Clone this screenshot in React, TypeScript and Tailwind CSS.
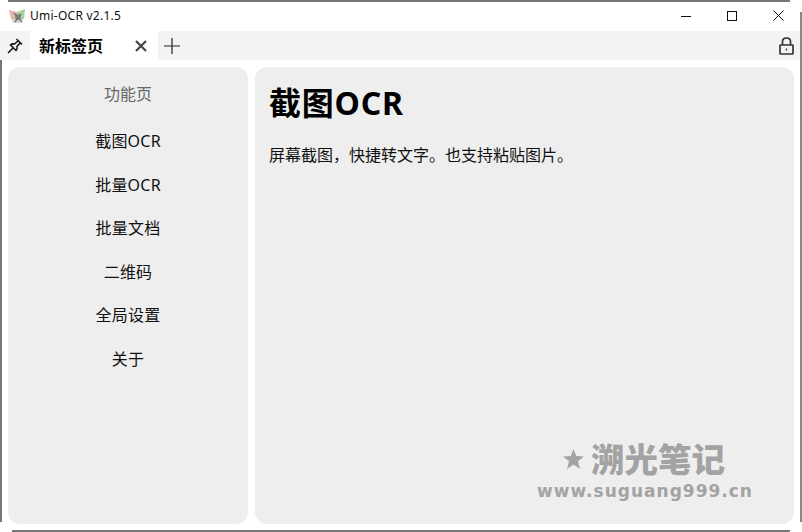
import React from "react";

const font = { fontFamily: '"Noto Sans","Noto Sans CJK SC",sans-serif' };

function Pin() {
  return (
    <svg width="16" height="16" viewBox="0 0 16 16" fill="none" stroke="#111" strokeWidth="1.5">
      <path d="M9.5 1 L15 6.5 M11.5 2.5 L7.5 6 Q5 5.5 3.5 7 L9 12.5 Q10.5 11 10 8.5 L13.5 4.5 M6 10 L1 15" />
    </svg>
  );
}

function Lock() {
  return (
    <svg width="15" height="18" viewBox="0 0 15 18" fill="none" stroke="#333" strokeWidth="1.7">
      <rect x="1" y="8" width="13" height="9" rx="0.5" />
      <path d="M3.5 8 V4.5 Q3.5 1 7.5 1 Q11.5 1 11.5 4.5 V8" />
      <path d="M7.5 11.5 V13.5" strokeWidth="1.3" />
    </svg>
  );
}

function Logo() {
  return (
    <svg width="17" height="16" viewBox="0 0 17 16">
      <path d="M0 2 L8 4 V11 H2 Z" fill="#e8b4b0" />
      <path d="M8 4 L16 1 L15 11 H8 Z" fill="#a8d0a0" />
      <path d="M2 11 H14 L12 15 H4 Z" fill="#d5d5d5" />
      <path d="M5 5 L13 14 M12 6 L6 14" stroke="#777" strokeWidth="1.3" />
      <rect x="7" y="7" width="4" height="4" fill="none" stroke="#666" />
    </svg>
  );
}

const nav = ["截图OCR", "批量OCR", "批量文档", "二维码", "全局设置", "关于"];

export default function App() {
  return (
    <div className="relative flex h-[532px] w-[802px] flex-col overflow-hidden bg-white text-black" style={font}>
      <div className="flex h-[31px] shrink-0 items-center pl-[9px]">
        <Logo />
        <span className="ml-[4px] text-[12px] leading-none tracking-[0.25px] text-[#111]">Umi-OCR v2.1.5</span>
        <div className="ml-auto flex items-center pr-[1px]">
          <div className="flex w-[46px] justify-center">
            <svg width="10" height="10" viewBox="0 0 10 10"><path d="M0 5.5H10" stroke="#111" /></svg>
          </div>
          <div className="flex w-[46px] justify-center">
            <svg width="10" height="10" viewBox="0 0 10 10"><rect x=".5" y=".5" width="9" height="9" fill="none" stroke="#111" /></svg>
          </div>
          <div className="flex w-[46px] justify-center">
            <svg width="11" height="11" viewBox="0 0 11 11"><path d="M.5 .5L10.5 10.5M10.5 .5L.5 10.5" stroke="#111" /></svg>
          </div>
        </div>
      </div>
      <div className="flex h-[29px] shrink-0 items-center bg-[#f3f3f3]">
        <div className="flex w-[30px] justify-center"><Pin /></div>
        <div className="flex h-full w-[128px] items-center bg-white pl-[9px] pr-[11px]">
          <span className="text-[16px] font-bold leading-none">新标签页</span>
          <svg className="ml-auto" width="12" height="12" viewBox="0 0 12 12"><path d="M1 1L11 11M11 1L1 11" stroke="#444" strokeWidth="2.2" /></svg>
        </div>
        <svg className="ml-[6px]" width="16" height="16" viewBox="0 0 16 16"><path d="M8 0V16M0 8H16" stroke="#222" strokeWidth="1.2" /></svg>
        <div className="ml-auto pr-[8px]"><Lock /></div>
      </div>
      <div className="flex min-h-0 flex-1 gap-[7px] pb-[8px] pl-[8px] pr-[8px] pt-[7px]">
        <aside className="flex w-[240px] flex-col items-center rounded-[12px] bg-[#eeeeee] pt-[4px]">
          <div className="flex h-[45px] items-center text-[16px] text-[#666]">功能页</div>
          <div className="mt-[3.5px] flex flex-col items-center">
            {nav.map((n) => (
              <div key={n} className="flex h-[43.5px] items-center text-[16px] tracking-[0.2px] text-[#111]">{n}</div>
            ))}
          </div>
        </aside>
        <main className="relative flex-1 rounded-[12px] bg-[#eeeeee] pl-[14px] pt-[13px]">
          <h1 className="text-[32px] font-bold leading-[46px] tracking-[0.8px]">截图OCR</h1>
          <p className="mt-[17px] text-[16px] leading-[24px] text-[#111]">屏幕截图，快捷转文字。也支持粘贴图片。</p>
          <div className="absolute left-[283px] top-[370px] flex w-[214px] flex-col items-center text-[#a3a3a3]">
            <div className="flex items-center gap-[7px] pr-[2px]">
              <svg width="21" height="20" viewBox="0 0 21 20" fill="#a3a3a3">
                <path d="M10.5 0 L13.2 7 L21 7.4 L15 12.2 L17 20 L10.5 15.6 L4 20 L6 12.2 L0 7.4 L7.8 7 Z" />
              </svg>
              <span className="text-[33.5px] font-black leading-[44px]">溯光笔记</span>
            </div>
            <span className="text-[17px] font-bold leading-[20px] tracking-[1px]" style={{ fontFamily: '"DejaVu Sans",sans-serif' }}>www.suguang999.cn</span>
          </div>
        </main>
      </div>
      <div className="pointer-events-none absolute left-[8px] right-[12px] top-0 h-[2px] bg-[#777]" />
      <div className="pointer-events-none absolute bottom-0 left-[12px] right-[12px] h-[2px] bg-[#777]" />
      <div className="pointer-events-none absolute bottom-[10px] right-0 top-[12px] w-[2px] bg-[#888]" />
      <div className="pointer-events-none absolute bottom-[10px] left-0 top-[60px] w-[2px] bg-[#777]" />
    </div>
  );
}
